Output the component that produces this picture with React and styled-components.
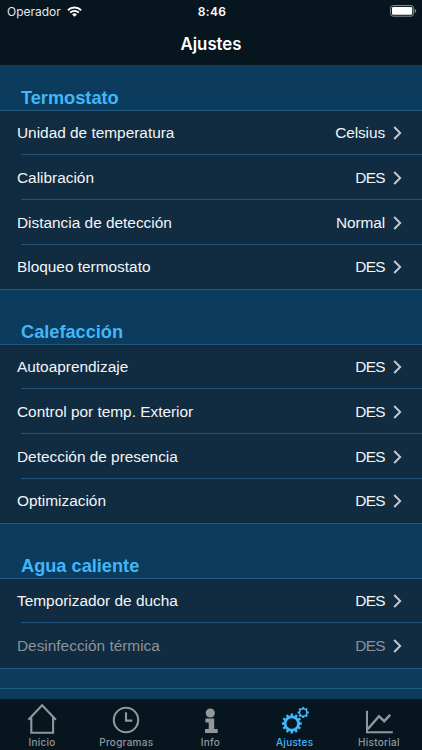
import React from 'react'
import styled, { createGlobalStyle } from 'styled-components'

const sections = [
    {
        title: 'Termostato',
        items: [
            { label: 'Unidad de temperatura', value: 'Celsius' },
            { label: 'Calibración', value: 'DES' },
            { label: 'Distancia de detección', value: 'Normal' },
            { label: 'Bloqueo termostato', value: 'DES' },
        ],
    },
    {
        title: 'Calefacción',
        items: [
            { label: 'Autoaprendizaje', value: 'DES' },
            { label: 'Control por temp. Exterior', value: 'DES' },
            { label: 'Detección de presencia', value: 'DES' },
            { label: 'Optimización', value: 'DES' },
        ],
    },
    {
        title: 'Agua caliente',
        items: [
            { label: 'Temporizador de ducha', value: 'DES' },
            { label: 'Desinfección térmica', value: 'DES', disabled: true },
        ],
    },
]

function WifiIcon() {
    return (
        <svg width="15" height="11" viewBox="0 0 15 11" fill="none" stroke="#fff" strokeWidth="1.9">
            <path d="M0.9 4.2a9.4 9.4 0 0 1 13.2 0" />
            <path d="M3.2 6.6a6.1 6.1 0 0 1 8.6 0" />
            <path d="M7.5 10.8L5.1 8.4a3.4 3.4 0 0 1 4.8 0z" fill="#fff" stroke="none" />
        </svg>
    )
}

function BatteryIcon() {
    return (
        <svg width="27" height="12" viewBox="0 0 27 12">
            <rect x="0.6" y="0.6" width="23" height="10.6" rx="2.6" fill="none" stroke="#8a9096" strokeWidth="1" />
            <rect x="2" y="2" width="20.2" height="7.8" rx="1.2" fill="#fff" />
            <path d="M24.8 4v3.8c.9-.3 1.4-1 1.4-1.9s-.5-1.6-1.4-1.9z" fill="#8a9096" />
        </svg>
    )
}

function HomeIcon() {
    return (
        <svg width="32" height="32" viewBox="0 0 32 32" fill="none" stroke="currentColor" strokeWidth="2.1">
            <path d="M2.4 16.8L16.1 2.3l13.8 14.5M5.3 14.400V29.700h21.800V14.400" />
        </svg>
    )
}

function ClockIcon() {
    return (
        <svg width="32" height="32" viewBox="0 0 32 32" fill="none" stroke="currentColor" strokeWidth="2.1">
            <circle cx="16" cy="17" r="12.2" />
            <path d="M16 9.2v8.4h6.3" />
        </svg>
    )
}

function InfoIcon() {
    return (
        <svg width="32" height="32" viewBox="0 0 32 32" fill="currentColor">
            <circle cx="16.3" cy="10" r="4.6" />
            <path d="M11.4 15.6h8.8v10.300h3.500v4.100H11v-4.100h3.700v-6.300h-3.300z" />
        </svg>
    )
}

// outline of a cog as alternating outer / inner points
function gearPath(cx, cy, outer, inner, teeth) {
    const step = (Math.PI * 2) / teeth
    const points = []
    for (let i = 0; i < teeth; i++) {
        const a = i * step - Math.PI / 2
        const corners = [
            [inner, -0.3],
            [outer, -0.22],
            [outer, 0.22],
            [inner, 0.3],
        ]
        corners.forEach(([r, t]) => {
            const x = cx + r * Math.cos(a + t * step)
            const y = cy + r * Math.sin(a + t * step)
            points.push(x.toFixed(2) + ' ' + y.toFixed(2))
        })
    }
    return 'M' + points.join('L') + 'Z'
}

function ring(cx, cy, r) {
    return `M${cx - r} ${cy}a${r} ${r} 0 1 0 ${r * 2} 0a${r} ${r} 0 1 0 ${-r * 2} 0Z`
}

function GearsIcon() {
    return (
        <svg width="32" height="32" viewBox="0 0 32 32" fill="currentColor" fillRule="evenodd">
            <path d={gearPath(12.8, 20.5, 10, 8.1, 12) + ring(12.8, 20.5, 5.3)} />
            <path d={gearPath(24.2, 9.5, 5.7, 4.5, 8) + ring(24.2, 9.5, 2.9)} />
        </svg>
    )
}

function ChartIcon() {
    return (
        <svg width="32" height="32" viewBox="0 0 32 32" fill="none" stroke="currentColor">
            <path d="M4 7.8v21.4h25.8" strokeWidth="2" />
            <path d="M4.6 26.2L16 13.200l5.2 5 6-6.400" strokeWidth="2.5" />
        </svg>
    )
}

const tabs = [
    { label: 'Inicio', icon: <HomeIcon /> },
    { label: 'Programas', icon: <ClockIcon /> },
    { label: 'Info', icon: <InfoIcon /> },
    { label: 'Ajustes', icon: <GearsIcon />, active: true },
    { label: 'Historial', icon: <ChartIcon /> },
]

export default function App() {
    return (
        <>
        <GlobalStyle />
        <Screen>
            <StatusBar>
                <Carrier>Operador <WifiIcon /></Carrier>
                <Time>8:46</Time>
                <Battery><BatteryIcon /></Battery>
            </StatusBar>
            <NavBar>
                <NavTitle>Ajustes</NavTitle>
            </NavBar>

            <Content>
                {sections.map((section) => (
                    <Section key={section.title}>
                        <SectionTitle>{section.title}</SectionTitle>
                        <List>
                            {section.items.map((item, i) => (
                                <Row key={item.label} $last={i === section.items.length - 1}>
                                    <Label $disabled={item.disabled}>{item.label}</Label>
                                    <Value $disabled={item.disabled} $tight={item.value === 'DES'}>{item.value}</Value>
                                    <Chevron viewBox="0 0 9 14"><path d="M1.2 1l6 6-6 6" /></Chevron>
                                </Row>
                            ))}
                        </List>
                    </Section>
                ))}
                <BottomLine />
            </Content>

            <TabBar>
                {tabs.map((tab) => (
                    <Tab key={tab.label} $active={tab.active}>
                        {tab.icon}
                        <TabLabel>{tab.label}</TabLabel>
                    </Tab>
                ))}
            </TabBar>
        </Screen>
        </>
    )
}

const GlobalStyle = createGlobalStyle`
  * {
    box-sizing: border-box;
  }
  body {
    margin: 0;
    background: #07151f;
    overflow: hidden;
  }
`;
const Screen = styled.div`
  display: flex;
  flex-direction: column;
  width: 422px;
  height: 750px;
  overflow: hidden;
  background: #0b3c5d;
  font-family: "Liberation Sans", Arial, sans-serif;
`;
const StatusBar = styled.div`
  display: grid;
  grid-template-columns: 1fr auto 1fr;
  align-items: center;
  flex: none;
  height: 22px;
  padding: 0 5px 0 7px;
  background: #07151f;
  color: #fff;
  font-family: Inter, sans-serif;
  font-size: 12px;
`;
const Carrier = styled.span`
  display: flex;
  align-items: center;
  gap: 6px;
  color: #e4e8eb;
`;
const Time = styled.span`
  font-weight: 600;
  letter-spacing: 0.3px;
`;
const Battery = styled.span`
  display: flex;
  justify-content: flex-end;
`;
const NavBar = styled.header`
  display: flex;
  align-items: center;
  justify-content: center;
  flex: none;
  height: 43px;
  background: #07151f;
`;
const NavTitle = styled.h1`
  margin: 0;
  color: #fff;
  font-family: Inter, sans-serif;
  font-size: 16.8px;
  font-weight: 600;
`;
const Content = styled.main`
  flex: 1;
  min-height: 0;
  overflow: hidden;
`;
const Section = styled.section`
  & + & h2 {
    height: 54px;
  }
`;
const SectionTitle = styled.h2`
  display: flex;
  align-items: flex-end;
  height: 45px;
  margin: 0;
  padding: 0 21px 1px;
  color: #41b6f8;
  font-size: 18.2px;
  font-weight: bold;
  line-height: 21px;
`;
const List = styled.div`
  background: #112b41;
  border-top: 1px solid #23597f;
  border-bottom: 1px solid #23597f;
`;
const Row = styled.div`
  display: flex;
  align-items: center;
  position: relative;
  height: ${(props) => (props.$last ? '43.75px' : '44.75px')};
  padding: 0 20px 0 17px;

  &::after {
    content: "";
    display: ${(props) => (props.$last ? 'none' : 'block')};
    position: absolute;
    left: 21px;
    right: 0;
    bottom: 0.5px;
    height: 1px;
    background: #20527a;
  }
`;
const Label = styled.span`
  flex: 1;
  color: ${(props) => (props.$disabled ? '#8b939b' : '#f3f6f8')};
  font-size: 15.4px;
`;
const Value = styled.span`
  color: ${(props) => (props.$disabled ? '#8b939b' : '#f3f6f8')};
  font-size: 15.4px;
  letter-spacing: ${(props) => (props.$tight ? '-0.6px' : '-0.1px')};
`;
const Chevron = styled.svg`
  width: 9px;
  height: 14px;
  margin-left: 8px;
  fill: none;
  stroke: #c3cad1;
  stroke-width: 1.9;
`;
const BottomLine = styled.div`
  height: 20px;
  border-bottom: 1px solid #23597f;
`;
const TabBar = styled.nav`
  display: grid;
  grid-template-columns: repeat(5, 1fr);
  flex: none;
  height: 51px;
  padding-right: 1px;
  background: #07151f;
`;
const Tab = styled.div`
  display: flex;
  flex-direction: column;
  align-items: center;
  padding-top: 4px;
  color: ${(props) => (props.$active ? '#41b6f8' : '#92979b')};
`;
const TabLabel = styled.span`
  font-family: Inter, sans-serif;
  font-size: 10px;
  font-weight: 500;
  line-height: 15px;
  letter-spacing: 0.25px;
`;
